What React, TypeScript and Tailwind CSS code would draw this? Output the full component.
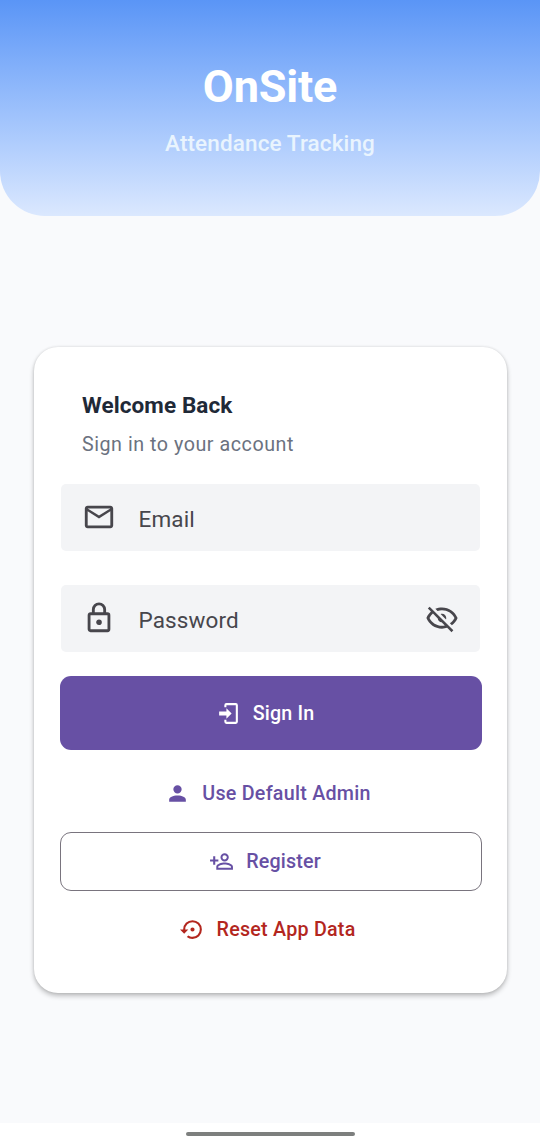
import type { ReactNode } from "react";

const icons = {
  email:
    "M22 6C22 4.9 21.1 4 20 4H4C2.9 4 2 4.9 2 6V18C2 19.1 2.9 20 4 20H20C21.1 20 22 19.1 22 18V6M20 6L12 11L4 6H20M20 18H4V8L12 13L20 8V18Z",
  lock: "M12,17C10.89,17 10,16.1 10,15C10,13.89 10.89,13 12,13A2,2 0 0,1 14,15A2,2 0 0,1 12,17M18,20V10H6V20H18M18,8A2,2 0 0,1 20,10V20A2,2 0 0,1 18,22H6C4.89,22 4,21.1 4,20V10C4,8.89 4.89,8 6,8H7V6A5,5 0 0,1 12,1A5,5 0 0,1 17,6V8H18M12,3A3,3 0 0,0 9,6V8H15V6A3,3 0 0,0 12,3Z",
  eyeOff:
    "M2,5.27L3.28,4L20,20.72L18.73,22L15.65,18.92C14.5,19.3 13.28,19.5 12,19.5C7,19.5 2.73,16.39 1,12C1.69,10.24 2.79,8.69 4.19,7.46L2,5.27M12,9A3,3 0 0,1 15,12C15,12.35 14.94,12.69 14.83,13L11,9.17C11.31,9.06 11.65,9 12,9M12,4.5C17,4.5 21.27,7.61 23,12C22.18,14.08 20.79,15.88 19,17.19L17.58,15.76C18.94,14.82 20.06,13.54 20.82,12C19.17,8.64 15.76,6.5 12,6.5C10.91,6.5 9.84,6.68 8.84,7L7.3,5.47C8.74,4.85 10.33,4.5 12,4.5M3.18,12C4.83,15.36 8.24,17.5 12,17.5C12.69,17.5 13.37,17.43 14,17.29L11.72,15C10.29,14.85 9.15,13.71 9,12.28L5.6,8.87C4.61,9.72 3.78,10.78 3.18,12Z",
  login:
    "M10,17V14H3V10H10V7L15,12L10,17M10,2H19A2,2 0 0,1 21,4V20A2,2 0 0,1 19,22H10A2,2 0 0,1 8,20V18H10V20H19V4H10V6H8V4A2,2 0 0,1 10,2Z",
  account:
    "M12,4A4,4 0 0,1 16,8A4,4 0 0,1 12,12A4,4 0 0,1 8,8A4,4 0 0,1 12,4M12,14C16.42,14 20,15.79 20,18V20H4V18C4,15.79 7.58,14 12,14Z",
  accountPlus:
    "M15,4A4,4 0 0,0 11,8A4,4 0 0,0 15,12A4,4 0 0,0 19,8A4,4 0 0,0 15,4M15,5.9C16.16,5.9 17.1,6.84 17.1,8C17.1,9.16 16.16,10.1 15,10.1A2.1,2.1 0 0,1 12.9,8A2.1,2.1 0 0,1 15,5.9M4,7V10H1V12H4V15H6V12H9V10H6V7H4M15,13C12.33,13 7,14.33 7,17V20H23V17C23,14.33 17.67,13 15,13M15,14.9C17.97,14.9 21.1,16.36 21.1,17V18.1H8.9V17C8.9,16.36 12,14.9 15,14.9Z",
  restore:
    "M12,3A9,9 0 0,0 3,12H0L4,16L8,12H5A7,7 0 0,1 12,5A7,7 0 0,1 19,12A7,7 0 0,1 12,19C10.5,19 9.09,18.5 7.94,17.7L6.5,19.14C8.04,20.3 9.94,21 12,21A9,9 0 0,0 21,12A9,9 0 0,0 12,3M14,12A2,2 0 0,0 12,10A2,2 0 0,0 10,12A2,2 0 0,0 14,12Z",
};

function Icon({ name, className }: { name: keyof typeof icons; className: string }) {
  return (
    <svg viewBox="0 0 24 24" className={`shrink-0 fill-current ${className}`} aria-hidden="true">
      <path d={icons[name]} />
    </svg>
  );
}

function Field({ icon, label, children }: { icon: "email" | "lock"; label: string; children?: ReactNode }) {
  return (
    <div className="mx-[1.5px] flex h-[67px] items-center rounded-[5px] bg-[#f3f4f6] px-[21px] text-[#47464c]">
      <Icon name={icon} className="mb-px size-[34px]" />
      <span className="ml-[22.5px] flex-1 pt-[3px] text-[22.5px] leading-7 tracking-[0.13px]">{label}</span>
      {children}
    </div>
  );
}

export default function App() {
  return (
    <div className="flex h-[1146px] w-[540px] flex-col bg-[#f9fafc] font-['Roboto',sans-serif]">
      <header className="flex h-[216px] flex-col items-center rounded-b-[45px] bg-linear-to-b from-[#5a95f6] to-[#dbe8fe] pt-[60px]">
        <h1 className="text-[45px] leading-[54px] font-bold tracking-[-0.15px] text-white">OnSite</h1>
        <p className="mt-[15px] text-[22.5px] leading-7 font-medium tracking-[0.12px] text-[#e9f4fe]">Attendance Tracking</p>
      </header>

      <main className="flex-1 pt-[131px] pr-[33px] pl-[34px]">
        <section className="flex h-[646px] flex-col rounded-[24px] bg-white px-[25.5px] pt-11 shadow-[0_3px_5px_rgba(0,0,0,0.24),0_0_3px_rgba(0,0,0,0.12)]">
          <div className="px-[22.5px]">
            <h2 className="text-[22.5px] leading-7 font-bold tracking-[0.1px] text-[#1f2937]">Welcome Back</h2>
            <p className="mt-3 text-[19.7px] leading-7 tracking-[0.53px] text-[#6b7280]">Sign in to your account</p>
          </div>
          <div className="mt-[25.4px] flex flex-col gap-[33.8px]">
            <Field icon="email" label="Email" />
            <Field icon="lock" label="Password">
              <Icon name="eyeOff" className="mb-px size-[34px]" />
            </Field>
          </div>
          <button className="mt-[24.3px] flex h-[73.4px] shrink-0 items-center justify-center rounded-[11px] bg-[#6750a4] pr-[11px] text-[19.7px] font-medium tracking-[0.14px] text-white">
            <Icon name="login" className="mt-px mr-3 size-[25px]" />
            <span className="mt-px">Sign In</span>
          </button>
          <button className="mt-[15px] flex h-14 items-center justify-center pr-[5px] text-[19.7px] font-medium tracking-[0.26px] text-[#6750a4]">
            <Icon name="account" className="mt-px mr-3 size-[25px]" />
            <span className="mt-px">Use Default Admin</span>
          </button>
          <button className="mt-[11px] flex h-[58.8px] items-center justify-center rounded-[11px] border border-[#79747e] pr-[11px] text-[19.7px] font-medium tracking-[0.16px] text-[#6750a4]">
            <Icon name="accountPlus" className="mr-3 size-[25px]" />
            <span className="mt-px">Register</span>
          </button>
          <button className="mt-[10px] flex h-14 items-center justify-center pr-[6px] text-[19.7px] font-medium tracking-[0.24px] text-[#b3261e]">
            <Icon name="restore" className="mt-px mr-3 size-[25px]" />
            <span className="mt-0.5">Reset App Data</span>
          </button>
        </section>
      </main>

      <footer className="flex h-[23px] justify-center bg-white pt-[9px]">
        <div className="h-1 w-[169px] rounded-full bg-[#7d7f7e]" />
      </footer>
    </div>
  );
}
